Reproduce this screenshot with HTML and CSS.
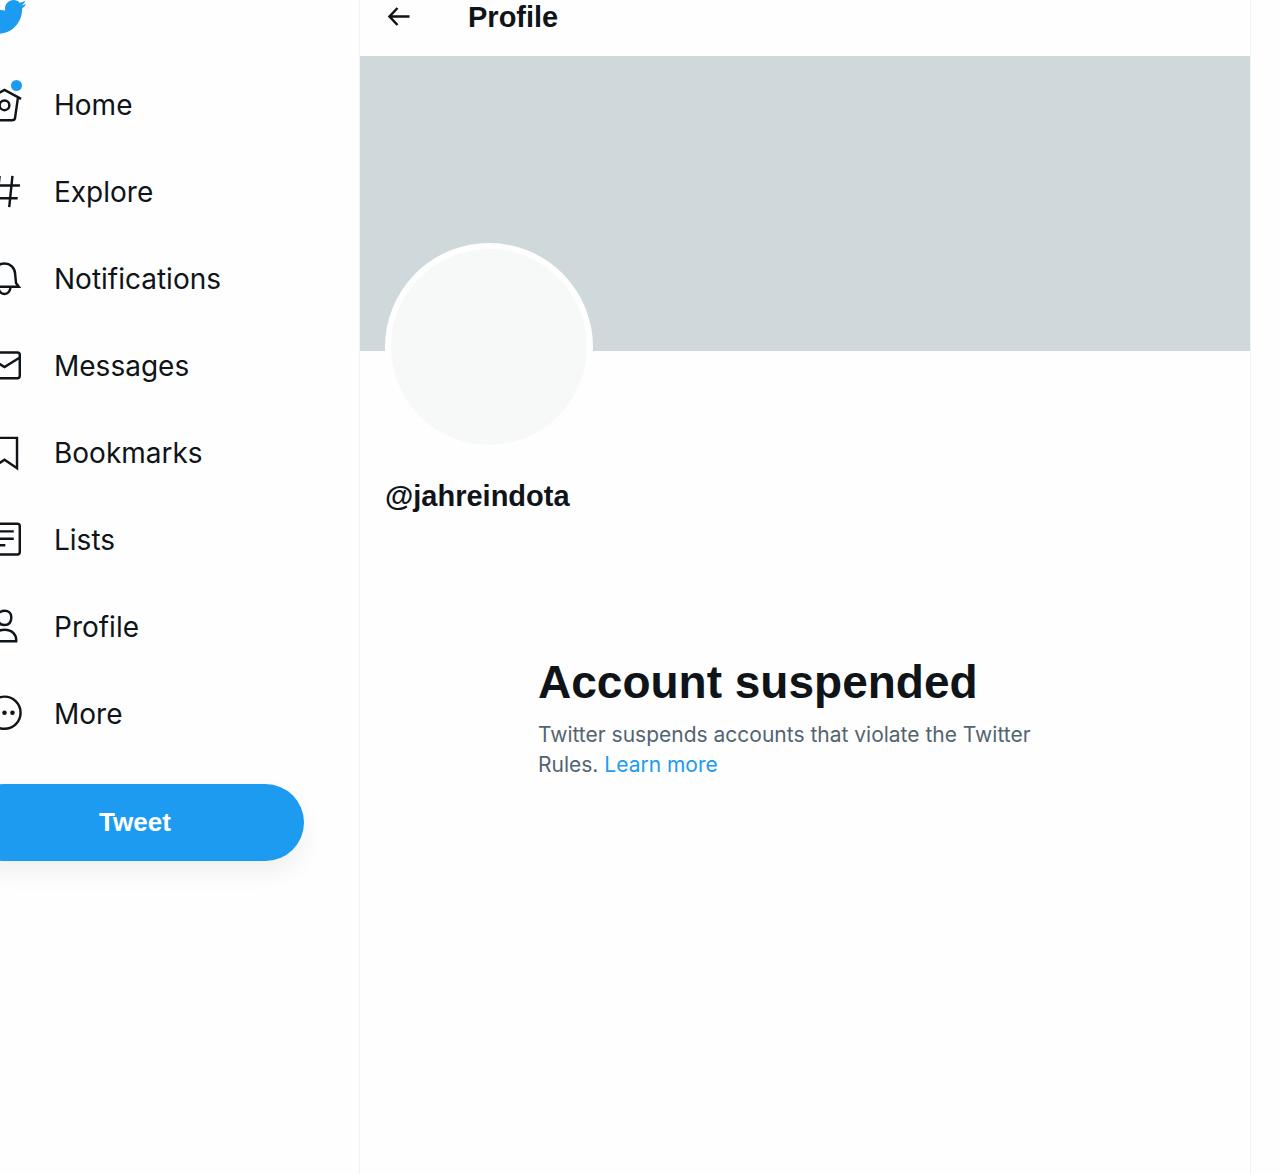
FILE: index.html
```html
<!DOCTYPE html>
<html lang="en">
<head>
    <meta charset="UTF-8">
    <meta name="viewport" content="width=device-width, initial-scale=1.0">
    <title>Profile / Twitter</title>
    <link rel="stylesheet" href="styles.css">
</head>
<body>

    <div class="layout">
        <header class="sidebar">
            <a href="#" class="logo" aria-label="Twitter">
                <svg viewBox="0 0 24 24"><path d="M23.643 4.937c-.835.37-1.732.62-2.675.733.962-.576 1.7-1.49 2.048-2.578-.9.534-1.897.922-2.958 1.13-.85-.904-2.06-1.47-3.4-1.47-2.572 0-4.658 2.086-4.658 4.66 0 .364.042.718.12 1.06-3.873-.195-7.304-2.05-9.602-4.868-.4.69-.63 1.49-.63 2.342 0 1.616.823 3.043 2.072 3.878-.764-.025-1.482-.234-2.11-.583v.06c0 2.257 1.605 4.14 3.737 4.568-.392.106-.803.162-1.227.162-.3 0-.593-.028-.877-.082.593 1.85 2.313 3.198 4.352 3.234-1.595 1.25-3.604 1.995-5.786 1.995-.376 0-.747-.022-1.112-.065 2.062 1.323 4.51 2.093 7.14 2.093 8.57 0 13.255-7.098 13.255-13.254 0-.2-.005-.402-.014-.602.91-.658 1.7-1.477 2.323-2.41z"/></svg>
            </a>

            <nav class="nav">
                <a href="#" class="nav-item">
                    <span class="nav-icon">
                        <svg viewBox="0 0 24 24"><path d="M1.8 8.500L12 3l10.200 5.500M3.700 7.600l1.800 12.600c.1.900.9 1.500 1.900 1.500h9.200c1 0 1.800-.6 1.900-1.500l1.800-12.600"/><circle cx="12" cy="12.500" r="3"/></svg>
                        <span class="badge"></span>
                    </span>
                    <span>Home</span>
                </a>
                <a href="#" class="nav-item">
                    <span class="nav-icon">
                        <svg viewBox="0 0 24 24"><path d="M9 2.400L7 21.600M16.900 2.400l-2 19.200M3.500 8.300h18M2.500 16.100h17.600"/></svg>
                    </span>
                    <span>Explore</span>
                </a>
                <a href="#" class="nav-item">
                    <span class="nav-icon">
                        <svg viewBox="0 0 24 24"><path d="M3.200 17.100h17.600L19.100 14.800l-.6-6C18.200 5.200 15.500 2.800 12 2.800S5.800 5.200 5.500 8.800l-.6 6zM8.300 17.300c0 2.400 1.600 4.200 3.700 4.200s3.700-1.800 3.700-4.200"/></svg>
                    </span>
                    <span>Notifications</span>
                </a>
                <a href="#" class="nav-item">
                    <span class="nav-icon">
                        <svg viewBox="0 0 24 24"><rect x="2.600" y="4" width="18.800" height="15.800" rx="1.500"/><path d="M2.800 7.200L12 13l9.200-5.800"/></svg>
                    </span>
                    <span>Messages</span>
                </a>
                <a href="#" class="nav-item">
                    <span class="nav-icon">
                        <svg viewBox="0 0 24 24"><path d="M4.300 3h15.400v18.700L12 16.400l-7.700 5.300z"/></svg>
                    </span>
                    <span>Bookmarks</span>
                </a>
                <a href="#" class="nav-item">
                    <span class="nav-icon">
                        <svg viewBox="0 0 24 24"><rect x="2.600" y="2.300" width="18.800" height="18.900" rx="1.500"/><path d="M6.300 7h11.400M6.300 11.500h11.400M6.300 15.500h6.200"/></svg>
                    </span>
                    <span>Lists</span>
                </a>
                <a href="#" class="nav-item">
                    <span class="nav-icon">
                        <svg viewBox="0 0 24 24"><path d="M12 11.100c2.700 0 4.200-1.900 4.200-4.800 0-2.500-1.700-4-4.200-4s-4.200 1.500-4.200 4c0 2.900 1.500 4.800 4.200 4.800zM4.800 21.100h14.400c.3-4-2.300-7.100-7.200-7.100s-7.500 3.100-7.200 7.100z"/></svg>
                    </span>
                    <span>Profile</span>
                </a>
                <a href="#" class="nav-item">
                    <span class="nav-icon">
                        <svg viewBox="0 0 24 24"><circle cx="12" cy="11.500" r="9.900"/><g class="dots"><circle cx="7.100" cy="11.500" r="1.400"/><circle cx="12" cy="11.500" r="1.400"/><circle cx="16.900" cy="11.500" r="1.400"/></g></svg>
                    </span>
                    <span>More</span>
                </a>
            </nav>

            <button type="button" class="tweet-button">Tweet</button>
        </header>

        <main class="main">
            <div class="top-bar">
                <button type="button" class="back-button" aria-label="Back">
                    <svg viewBox="0 0 24 20"><path d="M22.500 9.500H3M10.500 1L2.500 9.500l8 8.500"/></svg>
                </button>
                <h2>Profile</h2>
            </div>

            <div class="banner"></div>

            <div class="profile">
                <div class="avatar"></div>
                <p class="handle">@jahreindota</p>
            </div>

            <section class="notice">
                <h1>Account suspended</h1>
                <p>Twitter suspends accounts that violate the Twitter Rules. <a href="#">Learn more</a></p>
            </section>
        </main>
    </div>

</body>
</html>
```
FILE: styles.css
```css
* {
    box-sizing: border-box;
}

body {
    margin: 0;
    background-color: #fefefe;
    color: #0f1419;
    font-family: "Liberation Sans", Arial, Helvetica, sans-serif;
    overflow-x: hidden;
}

a {
    color: #1d9bf0;
    text-decoration: none;
}

h1,
h2,
p {
    margin: 0;
}

button {
    border: none;
    padding: 0;
    font-family: inherit;
    cursor: pointer;
}

svg {
    display: block;
    fill: none;
    stroke: currentColor;
    stroke-width: 1.5;
}

.layout {
    display: flex;
    min-height: 100vh;
}

/* Left navigation, runs off the left edge */
.sidebar {
    flex: 0 0 393px;
    margin-left: -34px;
    padding-right: 55px;
}

.logo {
    display: block;
    width: 44px;
    margin: -5px 0 0 17px;
}

.logo svg {
    fill: #1d9bf0;
    stroke: none;
}

.nav {
    display: flex;
    flex-direction: column;
    margin-top: 22px;
    padding-left: 19px;
}

.nav-item {
    display: flex;
    align-items: center;
    gap: 30px;
    height: 87px;
    color: #0f1419;
    font-family: Inter, "Liberation Sans", Arial, sans-serif;
    font-size: 28px;
    line-height: 36px;
}

.nav-icon {
    position: relative;
    width: 39px;
}

.dots {
    fill: currentColor;
    stroke: none;
}

.badge {
    position: absolute;
    top: -5px;
    right: 2px;
    width: 11px;
    height: 11px;
    border-radius: 50%;
    background-color: #1d9bf0;
}

.tweet-button {
    display: block;
    width: 100%;
    height: 77px;
    margin-top: 27px;
    border-radius: 39px;
    background-color: #1d9bf0;
    color: #fff;
    font-size: 26px;
    font-weight: bold;
    box-shadow: 0 12px 24px rgba(0, 0, 0, 0.06);
}

/* Profile column */
.main {
    flex: 1;
    margin-right: 29px;
    border-left: 1px solid #eff3f4;
    border-right: 1px solid #eff3f4;
}

.top-bar {
    display: flex;
    align-items: center;
    gap: 57px;
    height: 56px;
    padding: 0 27px 22px;
}

.top-bar h2 {
    font-size: 29px;
    line-height: 34px;
}

.back-button {
    width: 24px;
    background: none;
    color: #0f1419;
}

.back-button svg {
    stroke-width: 2.5;
}

.banner {
    height: 295px;
    background-color: #cfd9dc;
}

.profile {
    padding: 0 25px;
}

.avatar {
    position: relative;
    width: 208px;
    height: 208px;
    margin-top: -108px;
    border: 6px solid #fefefe;
    border-radius: 50%;
    background-color: #f7f9f9;
}

.handle {
    margin-top: 27px;
    font-size: 29px;
    font-weight: bold;
    line-height: 36px;
}

.notice {
    max-width: 534px;
    margin: 140px auto 0;
}

.notice h1 {
    font-size: 46px;
    line-height: 56px;
}

.notice p {
    margin-top: 10px;
    color: #536471;
    font-family: Inter, "Liberation Sans", Arial, sans-serif;
    font-size: 21px;
    line-height: 30px;
}
```
